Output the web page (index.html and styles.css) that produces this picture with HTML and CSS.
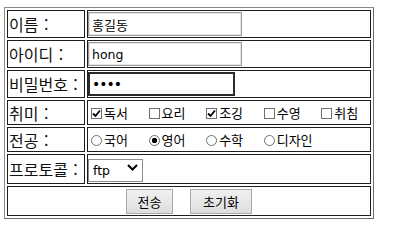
FILE: index.html
```html
<!DOCTYPE html>
<html lang="ko">
<head>
    <meta charset="UTF-8">
    <title>회원 가입</title>
    <link rel="stylesheet" href="styles.css">
</head>
<body>
    <form class="join-form">
        <table class="join-table">
            <tr class="row-text">
                <td class="label">이름 :</td>
                <td><input type="text" class="txt" value="홍길동"></td>
            </tr>
            <tr class="row-text">
                <td class="label">아이디 :</td>
                <td><input type="text" class="txt txt-en" value="hong"></td>
            </tr>
            <tr class="row-text">
                <td class="label">비밀번호 :</td>
                <td><input type="password" class="txt pw" value="1234" autofocus></td>
            </tr>
            <tr class="row-choice">
                <td class="label">취미 :</td>
                <td>
                    <label class="opt"><input type="checkbox" checked>독서</label>
                    <label class="opt"><input type="checkbox">요리</label>
                    <label class="opt"><input type="checkbox" checked>조깅</label>
                    <label class="opt"><input type="checkbox">수영</label>
                    <label class="opt"><input type="checkbox">취침</label>
                </td>
            </tr>
            <tr class="row-choice">
                <td class="label">전공 :</td>
                <td>
                    <label class="opt"><input type="radio" name="major">국어</label>
                    <label class="opt"><input type="radio" name="major" checked>영어</label>
                    <label class="opt"><input type="radio" name="major">수학</label>
                    <label class="opt"><input type="radio" name="major">디자인</label>
                </td>
            </tr>
            <tr class="row-select">
                <td class="label">프로토콜 :</td>
                <td>
                    <span class="select-wrap">
                        <select class="proto">
                            <option>ftp</option>
                            <option>http</option>
                        </select>
                        <svg class="chevron" width="11" height="7" viewBox="0 0 11 7">
                            <path d="M1 1 L5.5 5.5 L10 1" fill="none" stroke="#000" stroke-width="2"/>
                        </svg>
                    </span>
                </td>
            </tr>
            <tr class="row-btn">
                <td colspan="2">
                    <div class="btns">
                        <button type="submit" class="btn">전송</button>
                        <button type="reset" class="btn">초기화</button>
                    </div>
                </td>
            </tr>
        </table>
    </form>
</body>
</html>
```

FILE: styles.css
```css
body {
    margin: 0;
    font-family: "Noto Sans CJK KR", "Noto Sans", sans-serif;
    color: #000;
    background: #fff;
}
.join-form {
    margin: 0;
}
.join-table {
    margin: 7px 0 0 4px;
    width: 370px;
    table-layout: fixed;
    border-collapse: separate;
    border-spacing: 2px;
    border: 1px solid #6e6e6e;
    border-top-color: #8a8a8a;
    border-left-color: #8a8a8a;
}
.join-table td {
    border: 1px solid #1e1e1e;
    padding: 1px;
    vertical-align: middle;
}
.join-table td.label {
    width: 74px;
    font-size: 16px;
    line-height: 20px;
    color: #111;
    white-space: nowrap;
    word-spacing: 1px;
    overflow: hidden;
}

/* 텍스트 입력칸 */
.row-text td {
    height: 24px;
}
.txt {
    display: block;
    box-sizing: border-box;
    width: 154px;
    height: 24px;
    margin: 0 0 0 -1px;
    padding: 0 3px;
    border: 1px solid #9a9a9a;
    box-shadow: inset 0 0 0 1px #e6e6e6;
    font-family: "Noto Sans CJK KR", sans-serif;
    font-size: 13px;
    color: #000;
    outline: none;
}
.txt-en {
    font-family: "DejaVu Sans", "Noto Sans CJK KR", sans-serif;
    font-size: 12.5px;
}
.pw {
    width: 147px;
    border: 2px solid #2b2b2b;
    box-shadow: none;
    padding: 0 2px;
    font-family: "DejaVu Sans", sans-serif;
    font-size: 14px;
    letter-spacing: -1px;
    caret-color: #000;
}

/* 체크박스, 라디오 */
.row-choice td {
    height: 21px;
    font-size: 13px;
    line-height: 21px;
    white-space: nowrap;
}
.opt {
    display: inline-block;
    margin-right: 17px;
}
.opt:first-child {
    margin-left: 2px;
}
.opt input {
    appearance: none;
    -webkit-appearance: none;
    box-sizing: border-box;
    width: 11px;
    height: 11px;
    margin: 0 2px 0 0;
    vertical-align: -1px;
    border: 1px solid #707070;
    background: #fff;
}
.opt input[type="checkbox"]:checked {
    background: #fff url("data:image/svg+xml,%3Csvg xmlns='http://www.w3.org/2000/svg' width='9' height='9' viewBox='0 0 9 9'%3E%3Cpath d='M1 4.5 L3.5 7 L8 1.5' fill='none' stroke='%23000' stroke-width='1.8'/%3E%3C/svg%3E") center / 9px 9px no-repeat;
}
.opt input[type="radio"] {
    border-radius: 50%;
}
.opt input[type="radio"]:checked {
    background: radial-gradient(circle, #000 0, #000 2.4px, #fff 3px);
}

/* 프로토콜 선택 */
.row-select td {
    height: 23px;
}
.select-wrap {
    position: relative;
    display: inline-block;
    vertical-align: top;
}
.proto {
    appearance: none;
    -webkit-appearance: none;
    box-sizing: border-box;
    width: 55px;
    height: 23px;
    margin: 0 0 0 -1px;
    padding: 0 0 0 4px;
    border: 1px solid #8f8f8f;
    border-radius: 0;
    background: #fff;
    font-family: "DejaVu Sans", sans-serif;
    font-size: 12.5px;
    color: #000;
}
.chevron {
    position: absolute;
    right: 5px;
    top: 8px;
    pointer-events: none;
}

/* 버튼 */
.row-btn td {
    height: 26px;
}
.btns {
    display: flex;
    justify-content: center;
    gap: 17px;
}
.btn {
    box-sizing: border-box;
    height: 25px;
    padding: 0 9px;
    border: 1px solid #a9a9a9;
    border-radius: 0;
    background: linear-gradient(#f0f0f0, #dedede);
    font-family: "Noto Sans CJK KR", sans-serif;
    font-size: 13px;
    color: #000;
}
.btn:first-child {
    width: 47px;
}
.btn:last-child {
    width: 62px;
}
```
